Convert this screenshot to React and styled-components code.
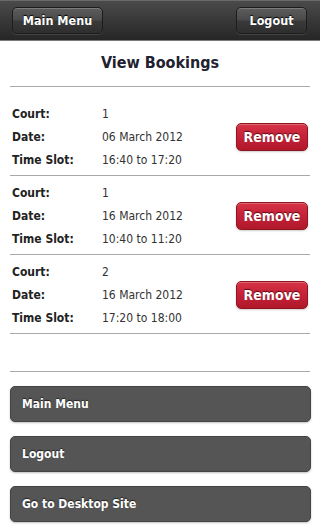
import React from 'react';
import styled, { createGlobalStyle } from 'styled-components';

const GlobalStyle = createGlobalStyle`
  body {
    margin: 0;
    background: #fff;
    font-family: "DejaVu Sans", Verdana, sans-serif;
    font-stretch: condensed;
  }
`;

const Page = styled.div`
  width: 320px;
  min-height: 525px;
  background: #fff;
`;

const Header = styled.header`
  display: flex;
  justify-content: space-between;
  align-items: center;
  height: 41px;
  padding: 0 13px 0 12px;
  box-sizing: border-box;
  background: linear-gradient(#4a4a4a 0%, #383838 50%, #262626 100%);
  border-top: 1px solid #6a6a6a;
  border-bottom: 1px solid #7a7a7a;
`;

const HeaderButton = styled.a`
  display: flex;
  align-items: center;
  justify-content: center;
  width: ${({ $width }) => $width}px;
  height: 27px;
  box-sizing: border-box;
  border: 1px solid #1c1c1c;
  border-radius: 5px;
  background: linear-gradient(#5c5c5c 0%, #4a4a4a 48%, #3a3a3a 52%, #2e2e2e 100%);
  box-shadow: inset 0 1px 0 rgba(255, 255, 255, 0.2), 0 1px 0 rgba(255, 255, 255, 0.12);
  color: #fff;
  font-size: 12.5px;
  font-weight: bold;
  text-decoration: none;
  text-shadow: 0 -1px 1px #000;
`;

const Content = styled.main`
  padding: 0 10px;
`;

const Title = styled.h2`
  margin: 0;
  padding: 12px 0 13px;
  line-height: 20px;
  text-align: center;
  font-size: 16px;
  font-weight: bold;
  color: #1f2230;
  border-bottom: 1px solid #aaa;
`;

const List = styled.div`
  margin-top: 10px;
`;

const Booking = styled.div`
  display: flex;
  align-items: center;
  padding: 5px 2px 4px 2px;
  border-bottom: 1px solid #aaa;
`;

const Fields = styled.div`
  flex: 1;
`;

const Row = styled.div`
  display: flex;
  height: 23px;
  align-items: center;
  font-size: 12px;
`;

const Label = styled.span`
  width: 90px;
  font-weight: bold;
  color: #222;
`;

const Value = styled.span`
  color: #333;
`;

const RemoveButton = styled.button`
  width: 72px;
  height: 28px;
  padding: 0;
  border: 1px solid #8e1520;
  border-radius: 5px;
  background: linear-gradient(#d63346 0%, #c4213a 50%, #b01829 100%);
  box-shadow: inset 0 1px 0 rgba(255, 255, 255, 0.25), 0 1px 2px rgba(0, 0, 0, 0.2);
  color: #fff;
  font-family: inherit;
  font-stretch: condensed;
  font-size: 14px;
  font-weight: bold;
  text-shadow: 0 -1px 1px #5a0a12;
`;

const Divider = styled.div`
  margin-top: 37px;
  border-top: 1px solid #aaa;
`;

const Nav = styled.nav`
  display: flex;
  flex-direction: column;
  gap: 14px;
  margin-top: 14px;
  margin-right: -1px;
`;

const NavButton = styled.a`
  display: flex;
  align-items: center;
  height: 36px;
  padding-left: 11px;
  box-sizing: border-box;
  border: 1px solid #444;
  border-radius: 5px;
  background: #555;
  box-shadow: 0 1px 2px rgba(0, 0, 0, 0.25);
  color: #fff;
  font-size: 12px;
  font-weight: bold;
  text-decoration: none;
  text-shadow: 0 -1px 1px #222;
`;

const bookings = [
  { court: '1', date: '06 March 2012', slot: '16:40 to 17:20' },
  { court: '1', date: '16 March 2012', slot: '10:40 to 11:20' },
  { court: '2', date: '16 March 2012', slot: '17:20 to 18:00' },
];

export default function App() {
  return (
    <Page>
      <GlobalStyle />
      <Header>
        <HeaderButton href="#" $width={91}>Main Menu</HeaderButton>
        <HeaderButton href="#" $width={71}>Logout</HeaderButton>
      </Header>
      <Content>
        <Title>View Bookings</Title>
        <List>
          {bookings.map((b, i) => (
            <Booking key={i}>
              <Fields>
                <Row>
                  <Label>Court:</Label>
                  <Value>{b.court}</Value>
                </Row>
                <Row>
                  <Label>Date:</Label>
                  <Value>{b.date}</Value>
                </Row>
                <Row>
                  <Label>Time Slot:</Label>
                  <Value>{b.slot}</Value>
                </Row>
              </Fields>
              <RemoveButton>Remove</RemoveButton>
            </Booking>
          ))}
        </List>
        <Divider />
        <Nav>
          <NavButton href="#">Main Menu</NavButton>
          <NavButton href="#">Logout</NavButton>
          <NavButton href="#">Go to Desktop Site</NavButton>
        </Nav>
      </Content>
    </Page>
  );
}
